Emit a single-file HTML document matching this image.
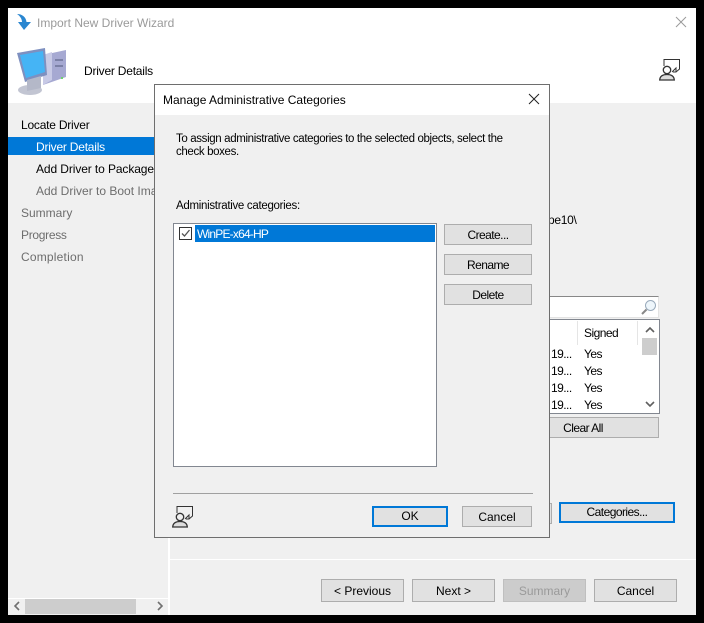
<!DOCTYPE html>
<html><head><meta charset="utf-8"><style>
html,body{margin:0;padding:0;background:#000}
#p{position:relative;width:704px;height:623px;background:#000;overflow:hidden;font-family:"Liberation Sans",sans-serif;font-size:12px;color:#000}
#p div{position:absolute;box-sizing:border-box}
.t{white-space:nowrap;line-height:14px}
.n{letter-spacing:-.22px}
.b{background:#e1e1e1;border:1px solid #adadad;text-align:center;font-size:12px;white-space:nowrap}
.s{letter-spacing:-.55px}
.f{border:2px solid #0078d7}
.g{color:#6d6d6d}
svg{position:absolute;overflow:visible}
</style></head><body><div id="p">
<div style="left:8px;top:8px;width:688px;height:607px;background:#f0f0f0"></div>
<div style="left:8px;top:8px;width:688px;height:95px;background:#fff"></div>
<div style="left:168px;top:103px;width:2px;height:512px;background:#fff"></div>
<div style="left:170px;top:559px;width:526px;height:1px;background:#fff"></div>
<svg style="left:0;top:0" width="40" height="40"><path d="M17 14C22 14 26 17 26.500 22L31 22L24 30L18 22L22 22C22 19 20 16 17 14Z" fill="#2a86d0"/></svg>
<div class="t" style="left:37px;top:16px;color:#9a9a9a">Import New Driver Wizard</div>
<svg style="left:0;top:0" width="80" height="100">
<ellipse cx="30" cy="90" rx="12" ry="5" fill="#c2c5d2"/>
<path d="M43 55L66 50V77L43 85Z" fill="#a6a9d2"/><path d="M43 55L52 52V80L43 85Z" fill="#c8cae6"/>
<path d="M17 53L45 48L47 75L25 82Z" fill="#7e90c0"/><path d="M20 55L43 51L45 72L26 78Z" fill="#45b4f5"/>
<path d="M27 80L41 76V88L27 91Z" fill="#b4b8c8"/>
<rect x="55" y="59" width="8" height="2" fill="#7b80a6"/><rect x="55" y="65" width="8" height="2" fill="#7b80a6"/><rect x="61" y="77" width="2" height="2" fill="#6fd06f"/></svg>
<div class="t n" style="left:84px;top:64px;width:80px">Driver Details</div>
<svg style="left:659px;top:59px" width="22" height="22" viewBox="0 0 22 22" fill="none" stroke="#333"><path d="M5 7V.500H20.500V10L17 13H14"/><path d="M17 13V9L13 13"/><circle cx="8" cy="11" r="3.700" stroke-width="1.300"/><path d="M.700 21C1 17 4 15.500 8 15.500S15 17 15.300 21Z" fill="#ddd" stroke-width="1.300"/></svg>
<svg style="left:675px;top:16px" width="12" height="12" stroke="#9a9a9a" stroke-width="1"><path d="M1 1L11 11M11 1L1 11"/></svg>
<div class="t n" style="left:21px;top:118px">Locate Driver</div>
<div style="left:8px;top:137px;width:146px;height:18px;background:#0078d7"></div>
<div class="t n" style="left:36px;top:140px;color:#fff">Driver Details</div>
<div class="t" style="left:36px;top:162px;width:118px;overflow:hidden;letter-spacing:-.1px">Add Driver to Packages</div>
<div class="t g" style="left:36px;top:184px;width:118px;overflow:hidden">Add Driver to Boot Images</div>
<div class="t g" style="left:21px;top:206px">Summary</div>
<div class="t g" style="left:21px;top:228px;letter-spacing:-.3px">Progress</div>
<div class="t g" style="left:21px;top:250px;letter-spacing:.2px">Completion</div>
<div style="left:8px;top:598px;width:160px;height:1px;background:#fff"></div>
<div style="left:25px;top:599px;width:111px;height:15px;background:#cdcdcd"></div>
<svg style="left:12px;top:601px" width="10" height="10" fill="none" stroke="#707070" stroke-width="1.600"><path d="M7 1L3 5L7 9"/></svg>
<svg style="left:155px;top:601px" width="10" height="10" fill="none" stroke="#707070" stroke-width="1.600"><path d="M3 1L7 5L3 9"/></svg>
<div class="t" style="left:549px;top:213px;width:30px;overflow:hidden;text-indent:-1px;letter-spacing:-.3px">pe10\</div>
<div style="left:549px;top:296px;width:110px;height:22px;background:#fff;border-top:1px solid #888;border-right:1px solid #e3e3e3;border-bottom:1px solid #e3e3e3"></div>
<svg style="left:640px;top:299px" width="18" height="18" fill="none"><circle cx="10.500" cy="6.500" r="5" stroke="#9ab" fill="#eef6fb"/><path d="M6.500 10.500L2 15" stroke="#888" stroke-width="2"/></svg>
<div style="left:549px;top:319px;width:111px;height:95px;background:#fff;border:1px solid #828790;border-left:0"></div>
<div style="left:577px;top:321px;width:1px;height:24px;background:#e5e5e5"></div>
<div style="left:637px;top:321px;width:1px;height:24px;background:#e5e5e5"></div>
<div class="t s" style="left:584px;top:326px">Signed</div>
<div style="left:642px;top:338px;width:15px;height:17px;background:#cdcdcd"></div>
<svg style="left:645px;top:325px" width="10" height="10" fill="none" stroke="#606060" stroke-width="1.600"><path d="M1 7L5 3L9 7"/></svg>
<svg style="left:645px;top:399px" width="10" height="10" fill="none" stroke="#606060" stroke-width="1.600"><path d="M1 3L5 7L9 3"/></svg>
<div class="t s" style="left:551px;top:347px">19...</div><div class="t s" style="left:584px;top:347px">Yes</div>
<div class="t s" style="left:551px;top:364px">19...</div><div class="t s" style="left:584px;top:364px">Yes</div>
<div class="t s" style="left:551px;top:381px">19...</div><div class="t s" style="left:584px;top:381px">Yes</div>
<div class="t s" style="left:551px;top:398px">19...</div><div class="t s" style="left:584px;top:398px">Yes</div>
<div class="b s" style="left:507px;top:417px;width:152px;height:21px;line-height:20px">Clear All</div>
<div class="b" style="left:540px;top:503px;width:12px;height:21px"></div>
<div class="b f s" style="left:559px;top:502px;width:116px;height:21px;line-height:17px">Categories...</div>
<div class="b" style="left:321px;top:579px;width:83px;height:23px;line-height:22px">&lt; Previous</div>
<div class="b" style="left:412px;top:579px;width:83px;height:23px;line-height:22px">Next &gt;</div>
<div class="b" style="left:503px;top:579px;width:83px;height:23px;line-height:22px;background:#ccc;border-color:#bfbfbf;color:#9a9a9a">Summary</div>
<div class="b" style="left:594px;top:579px;width:83px;height:23px;line-height:22px">Cancel</div>
<div style="left:154px;top:84px;width:396px;height:454px;background:#f0f0f0;border:1px solid #6e6e6e"></div>
<div style="left:155px;top:85px;width:394px;height:30px;background:#fff"></div>
<div class="t" style="left:163px;top:93px">Manage Administrative Categories</div>
<svg style="left:528px;top:93px" width="12" height="12" stroke="#222" stroke-width="1"><path d="M1 1L11 11M11 1L1 11"/></svg>
<div class="t" style="left:176px;top:133px;font-size:11.500px;line-height:13px;letter-spacing:-.36px">To assign administrative categories to the selected objects, select the<br>check boxes.</div>
<div class="t" style="left:176px;top:199px;font-size:11.500px;letter-spacing:-.3px">Administrative categories:</div>
<div style="left:173px;top:223px;width:264px;height:244px;background:#fff;border:1px solid #828790"></div>
<div style="left:195px;top:225px;width:240px;height:17px;background:#0078d7"></div>
<div class="t" style="left:197px;top:227px;color:#fff;letter-spacing:-.8px">WinPE-x64-HP</div>
<div style="left:179px;top:227px;width:13px;height:13px;background:#fff;border:1px solid #333"></div>
<svg style="left:180px;top:228px" width="11" height="11" fill="none" stroke="#555" stroke-width="1.300"><path d="M2 5.500L4.500 8L9.500 2"/></svg>
<div class="b s" style="left:444px;top:224px;width:88px;height:21px;line-height:20px">Create...</div>
<div class="b s" style="left:444px;top:254px;width:88px;height:21px;line-height:20px">Rename</div>
<div class="b s" style="left:444px;top:284px;width:88px;height:21px;line-height:20px">Delete</div>
<div style="left:173px;top:493px;width:360px;height:1px;background:#a0a0a0"></div>
<svg style="left:172px;top:506px" width="22" height="22" viewBox="0 0 22 22" fill="none" stroke="#333"><path d="M5 7V.500H20.500V10L17 13H14"/><path d="M17 13V9L13 13"/><circle cx="8" cy="11" r="3.700" stroke-width="1.300"/><path d="M.700 21C1 17 4 15.500 8 15.500S15 17 15.300 21Z" fill="#ddd" stroke-width="1.300"/></svg>
<div class="b f" style="left:372px;top:506px;width:76px;height:21px;line-height:17px">OK</div>
<div class="b" style="left:462px;top:506px;width:70px;height:21px;line-height:20px">Cancel</div>
</div></body></html>
